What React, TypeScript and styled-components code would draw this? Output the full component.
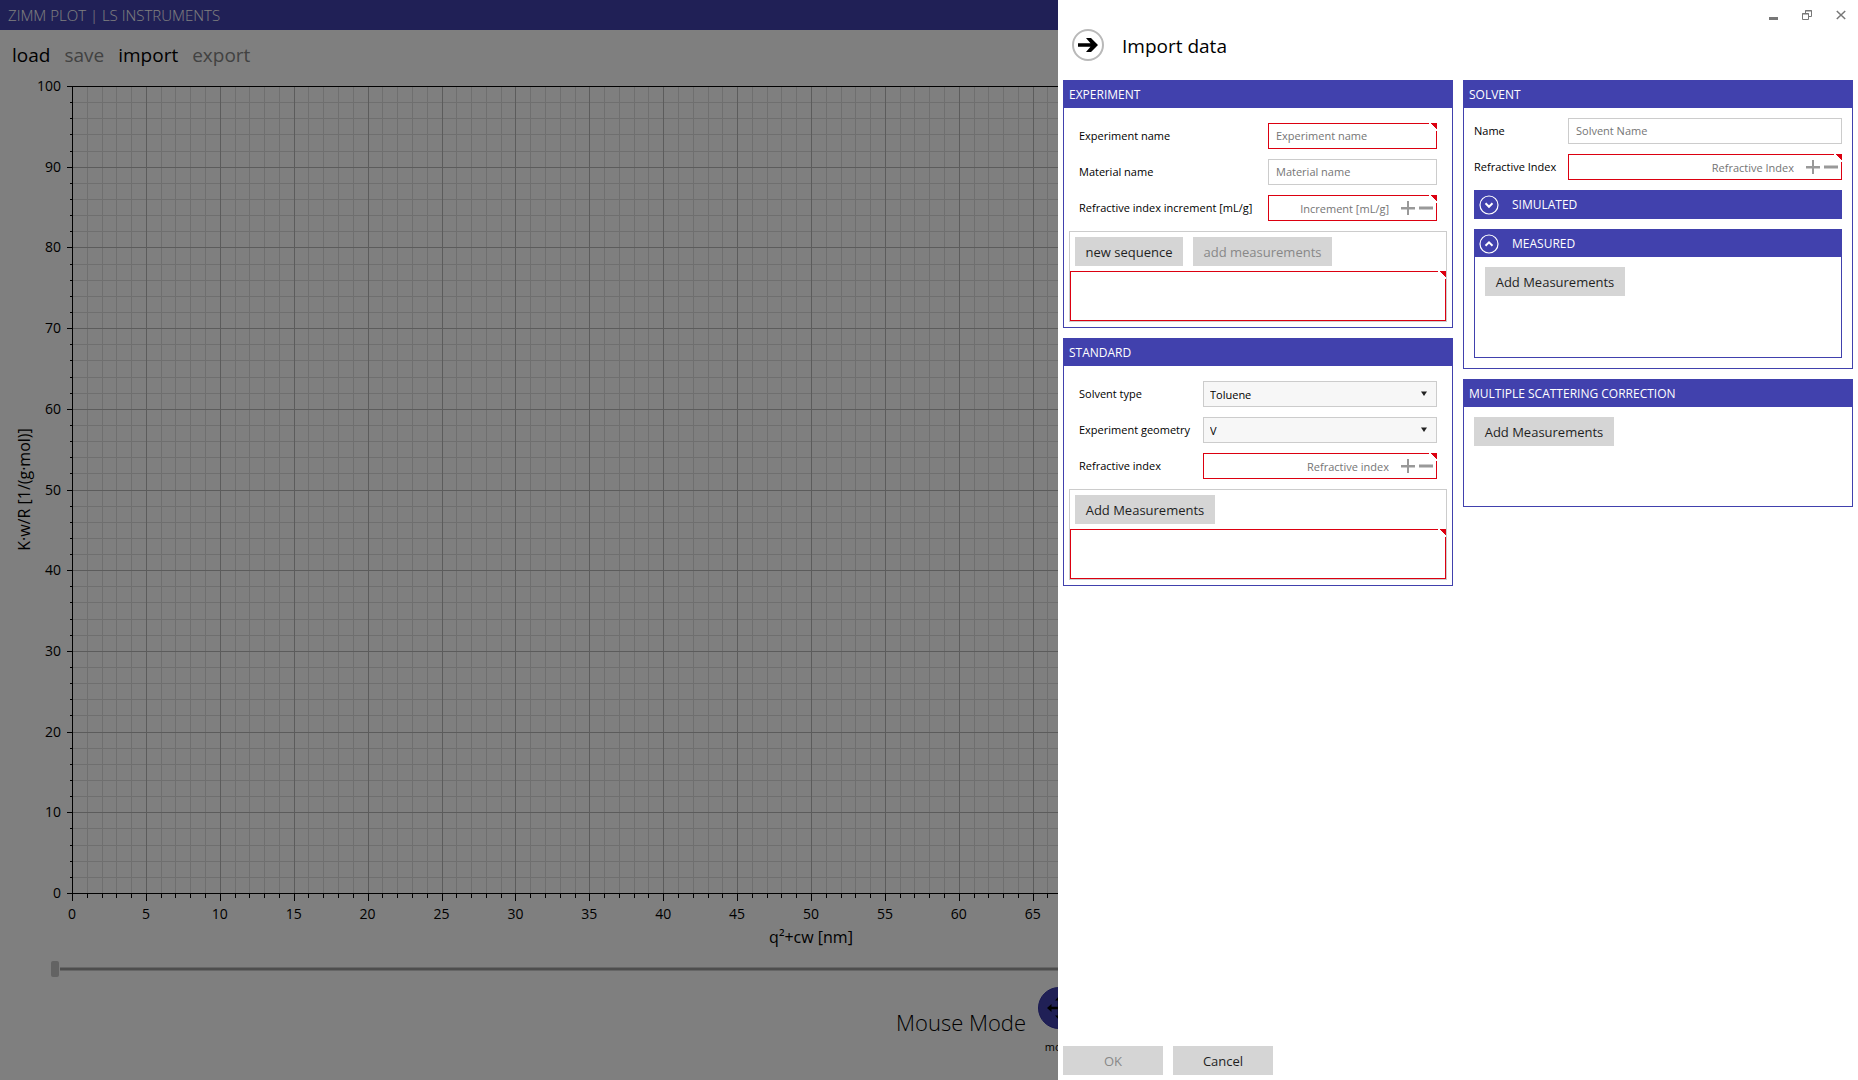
import React, { ReactNode, useId, useState } from 'react';
import styled, { createGlobalStyle, css } from 'styled-components';

const accent = '#4141ad';
const error = '#dc0010';
const border = '#cccccc';

const GlobalStyle = createGlobalStyle`
  *, *::before, *::after { box-sizing: border-box; }
  body { margin: 0; background: #fff; overflow: hidden; }
  body, button, input, select {
    font-family: "Open Sans", "Noto Sans", "Liberation Sans", sans-serif;
  }
`;

/* ---------- main window ---------- */

const Window = styled.main`
  display: flex;
  flex-direction: column;
  height: 100vh;
  color: #000;
`;

const TitleBar = styled.header`
  height: 30px;
  padding: 0 8px;
  background: ${accent};
  color: #fff;
  font-size: 15px;
  font-weight: 300;
  line-height: 31px;
`;

const Toolbar = styled.nav`
  display: flex;
  gap: 14px;
  height: 56px;
  padding: 0 12px;
`;

const ToolbarButton = styled.button`
  height: 50px;
  padding: 0;
  border: 0;
  background: none;
  color: #000;
  font-size: 19px;
  line-height: 50px;

  &:disabled { color: #848484; }
`;

const PlotArea = styled.section`
  display: grid;
  flex: 1;
  min-height: 0;
  padding: 0 308px 0 72px;
`;

const PlotSvg = styled.svg`
  display: block;
  width: 100%;
  height: 100%;
  overflow: visible;
  fill: #000;
  font-family: "Open Sans", "Noto Sans", sans-serif;
`;

const RangeSlider = styled.input`
  appearance: none;
  flex: none;
  height: 16px;
  margin: 68px 300px 0 51px;
  background: linear-gradient(#ccc 0 1px, #9a9a9a 1px 3px, #ccc 3px) 9px 6px / 100% 4px no-repeat;

  &::-webkit-slider-thumb {
    appearance: none;
    width: 8px;
    height: 16px;
    border-radius: 2px;
    background: #c6c6c6;
  }
`;

const ModeBar = styled.div`
  display: flex;
  height: 103px;
  padding-top: 10px;
  margin-left: calc(50% - 33px);
`;

const ModeTitle = styled.h2`
  width: 141px;
  margin: 0;
  font-size: 22px;
  font-weight: 300;
  line-height: 70px;
`;

const ModeButton = styled.button`
  display: flex;
  flex-direction: column;
  align-items: center;
  gap: 8px;
  width: 44px;
  padding: 0;
  border: 0;
  background: none;
  color: #000;
  font-size: 11px;
  line-height: 20px;
`;

const Dimmer = styled.div`
  position: fixed;
  inset: 0;
  background: rgba(0, 0, 0, 0.5);
`;

/* ---------- flyout ---------- */

const Flyout = styled.section`
  position: fixed;
  inset: 0 0 0 auto;
  display: flex;
  flex-direction: column;
  width: 800px;
  max-width: 100%;
  padding: 0 5px;
  background: #fff;
`;

const WindowButtons = styled.div`
  display: flex;
  justify-content: flex-end;
  height: 29px;
  margin-right: -5px;
`;

const WindowButton = styled.button`
  display: grid;
  place-items: center;
  width: 34px;
  padding: 0;
  border: 0;
  background: none;
`;

const FlyoutHeader = styled.header`
  display: flex;
  align-items: center;
  gap: 18px;
  height: 32px;
  margin: 0 9px 19px;
`;

const BackButton = styled.button`
  width: 32px;
  height: 32px;
  padding: 0;
  border: 0;
  background: none;
`;

const FlyoutTitle = styled.h1`
  margin: 0;
  padding-top: 2px;
  font-size: 19px;
  font-weight: 400;
  line-height: 32px;
`;

const Columns = styled.div`
  display: grid;
  flex: 1;
  grid-template-columns: repeat(2, minmax(0, 1fr));
  align-items: start;
  gap: 10px;
`;

const Column = styled.div`
  display: grid;
  grid-template-columns: minmax(0, 1fr);
  gap: 10px;
`;

const Panel = styled.section`
  border: 1px solid ${accent};
`;

const PanelTitle = styled.h2`
  height: 27px;
  margin: 0;
  padding: 0 5px;
  background: ${accent};
  color: #fff;
  font-size: 12px;
  font-weight: 400;
  line-height: 27px;
`;

const PanelBody = styled.div<{ $inset?: number; $minHeight?: number }>`
  padding: ${p => p.$inset ?? 5}px;
  min-height: ${p => p.$minHeight ?? 0}px;
`;

const Form = styled.div<{ $labelWidth: number; $inset?: boolean }>`
  display: grid;
  grid-template-columns: ${p => p.$labelWidth}px minmax(0, 1fr);
  row-gap: 10px;
  margin-bottom: 10px;
  padding: ${p => (p.$inset ? '10px 10px 0' : '0')};
`;

const Label = styled.label`
  font-size: 11px;
  line-height: 26px;
  white-space: nowrap;
`;

const field = css<{ $invalid?: boolean }>`
  width: 100%;
  height: 26px;
  border: 1px solid ${p => (p.$invalid ? error : border)};
  border-radius: 0;
  font-size: 11px;
`;

const FieldFrame = styled.div`
  position: relative;
`;

const TextInput = styled.input<{ $invalid?: boolean }>`
  ${field}
  display: block;
  padding: 0 7px 2px;
  background: #fff;
  outline: 0;

  &::placeholder { color: #757575; opacity: 1; }
`;

const NumberFrame = styled.div<{ $invalid?: boolean }>`
  ${field}
  display: flex;
  align-items: center;
  gap: 4px;
  padding-right: 3px;
`;

const NumberInput = styled.input`
  flex: 1;
  min-width: 0;
  height: 24px;
  padding: 0 8px;
  border: 0;
  outline: 0;
  background: none;
  font-size: 11px;
  text-align: right;

  &::placeholder { color: #757575; opacity: 1; }
`;

const SpinButton = styled.button`
  display: grid;
  width: 14px;
  height: 24px;
  padding: 0;
  border: 0;
  background: none;
  place-items: center;
`;

const ErrorCorner = styled.span`
  position: absolute;
  top: 0;
  right: 0;
  width: 8px;
  height: 8px;
  background: linear-gradient(to top right, #fff 0 60%, ${error} 60%);
`;

const SelectFrame = styled.div`
  position: relative;
`;

const Select = styled.select`
  ${field}
  display: block;
  appearance: none;
  padding: 0 6px;
  background: #f7f7f7;
  color: #000;
`;

const SelectArrow = styled.svg`
  position: absolute;
  top: 10px;
  right: 10px;
  pointer-events: none;
`;

const ListFrame = styled.div`
  border: 1px solid ${border};
`;

const ButtonRow = styled.div`
  display: flex;
  gap: 10px;
  padding: 5px;
`;

const Button = styled.button<{ $width: number }>`
  display: block;
  width: ${p => p.$width}px;
  height: 29px;
  padding: 1px 0 0;
  border: 0;
  background: #d5d5d5;
  color: #1f1f1f;
  font-size: 13px;
  line-height: 28px;

  &:disabled { color: #888; }
`;

const MeasurementList = styled.div`
  position: relative;
  height: 50px;
  border: 1px solid ${error};

  ${ErrorCorner} { top: -1px; right: -1px; }
`;

const Expanders = styled.div`
  display: grid;
  gap: 10px;
`;

const ExpanderFrame = styled.div`
  border: 1px solid ${accent};
`;

const ExpanderHeader = styled.button`
  display: flex;
  align-items: center;
  gap: 13px;
  width: 100%;
  height: 27px;
  padding: 0 4px;
  border: 0;
  background: ${accent};
  color: #fff;
  font-size: 12px;
`;

const ExpanderBody = styled.div`
  min-height: 100px;
  padding: 10px;
`;

const FlyoutFooter = styled.footer`
  display: flex;
  gap: 10px;
  padding-bottom: 5px;
`;

/* ---------- parts ---------- */

function range(from: number, to: number, step: number) {
  const out: number[] = [];
  for (let v = from; v <= to; v += step) out.push(v);
  return out;
}

function ZimmPlot() {
  const xs = range(0, 100, 1);
  const ys = range(0, 100, 2);
  const minor = '#dedede';
  const major = '#b8b8b8';
  return (
    <PlotSvg role="img" aria-label="Zimm plot">
      <g transform="translate(0.5 0.5)" shapeRendering="crispEdges" strokeWidth="1">
        {xs.filter(v => v % 5).map(v => (
          <line key={v} x1={`${v}%`} x2={`${v}%`} y1="0" y2="100%" stroke={minor} />
        ))}
        {ys.filter(v => v % 10).map(v => (
          <line key={v} x1="0" x2="100%" y1={`${v}%`} y2={`${v}%`} stroke={minor} />
        ))}
        {xs.filter(v => v % 5 === 0).map(v => (
          <line key={v} x1={`${v}%`} x2={`${v}%`} y1="0" y2="100%" stroke={major} />
        ))}
        {ys.filter(v => v % 10 === 0).map(v => (
          <line key={v} x1="0" x2="100%" y1={`${v}%`} y2={`${v}%`} stroke={major} />
        ))}
        <rect width="100%" height="100%" fill="none" stroke="#000" />
        {ys.map(v => (
          <line key={v} x1={v % 10 ? -3 : -6} x2="0" y1={`${v}%`} y2={`${v}%`} stroke="#000" />
        ))}
        <svg y="100%" width="100%" height="7" overflow="visible">
          {xs.map(v => (
            <line key={v} x1={`${v}%`} x2={`${v}%`} y1="0" y2={v % 5 ? 4 : 7} stroke="#000" />
          ))}
        </svg>
      </g>
      <g fontSize="14" textAnchor="end">
        {range(0, 100, 10).map(v => (
          <text key={v} x="-11" y={`${100 - v}%`} dy="5">{v}</text>
        ))}
      </g>
      <g fontSize="14" textAnchor="middle">
        {range(0, 100, 5).map(v => (
          <text key={v} x={`${v}%`} y="100%" dy="26">{v}</text>
        ))}
      </g>
      <text x="50%" y="100%" dy="50" fontSize="16" textAnchor="middle">q²+cw [nm]</text>
      <svg y="50%" overflow="visible">
        <text transform="translate(-42 0) rotate(-90)" fontSize="16" textAnchor="middle">
          K·w/R [1/(g·mol)]
        </text>
      </svg>
    </PlotSvg>
  );
}

function TextField({ label, placeholder, invalid }: { label: string; placeholder: string; invalid?: boolean }) {
  const id = useId();
  return (
    <>
      <Label htmlFor={id}>{label}</Label>
      <FieldFrame>
        <TextInput id={id} placeholder={placeholder} $invalid={invalid} />
        {invalid && <ErrorCorner />}
      </FieldFrame>
    </>
  );
}

function NumberField({ label, placeholder }: { label: string; placeholder: string }) {
  const id = useId();
  const [value, setValue] = useState('');
  const step = (d: number) => setValue(String((Number(value) || 0) + d));
  return (
    <>
      <Label htmlFor={id}>{label}</Label>
      <FieldFrame>
        <NumberFrame $invalid>
          <NumberInput
            id={id}
            inputMode="decimal"
            placeholder={placeholder}
            value={value}
            onChange={e => setValue(e.target.value)}
          />
          <SpinButton type="button" aria-label="Increase" onClick={() => step(1)}>
            <svg width="14" height="14" viewBox="0 0 14 14" fill="#999">
              <path d="M6 0h2v6h6v2.500H8V14H6V8.500H0V6h6z" />
            </svg>
          </SpinButton>
          <SpinButton type="button" aria-label="Decrease" onClick={() => step(-1)}>
            <svg width="14" height="14" viewBox="0 0 14 14" fill="#999">
              <path d="M0 5.500h14v3H0z" />
            </svg>
          </SpinButton>
        </NumberFrame>
        <ErrorCorner />
      </FieldFrame>
    </>
  );
}

function SelectField({ label, options }: { label: string; options: string[] }) {
  const id = useId();
  return (
    <>
      <Label htmlFor={id}>{label}</Label>
      <SelectFrame>
        <Select id={id}>
          {options.map(o => <option key={o}>{o}</option>)}
        </Select>
        <SelectArrow width="6" height="5" viewBox="0 0 6 5" fill="#222">
          <path d="M0 0.500h6L3 5z" />
        </SelectArrow>
      </SelectFrame>
    </>
  );
}

function Expander({ title, open: initial, children }: { title: string; open?: boolean; children?: ReactNode }) {
  const [open, setOpen] = useState(!!initial);
  return (
    <ExpanderFrame>
      <ExpanderHeader type="button" aria-expanded={open} onClick={() => setOpen(!open)}>
        <svg width="20" height="20" viewBox="0 0 20 20" fill="none" stroke="#fff">
          <circle cx="10" cy="10" r="9" strokeWidth="1.200" />
          <path d={open ? 'M6.500 11.800L10 8.300l3.500 3.500' : 'M6.500 8.300L10 11.800l3.500-3.500'} strokeWidth="2" />
        </svg>
        {title}
      </ExpanderHeader>
      {open && <ExpanderBody>{children}</ExpanderBody>}
    </ExpanderFrame>
  );
}

export default function App() {
  return (
    <>
      <GlobalStyle />
      <Window>
        <TitleBar>ZIMM PLOT | LS INSTRUMENTS</TitleBar>
        <Toolbar>
          <ToolbarButton>load</ToolbarButton>
          <ToolbarButton disabled>save</ToolbarButton>
          <ToolbarButton>import</ToolbarButton>
          <ToolbarButton disabled>export</ToolbarButton>
        </Toolbar>
        <PlotArea><ZimmPlot /></PlotArea>
        <RangeSlider type="range" min={0} max={100} defaultValue={0} aria-label="Plot range" />
        <ModeBar>
          <ModeTitle>Mouse Mode</ModeTitle>
          <ModeButton>
            <svg width="42" height="42" viewBox="0 0 42 42">
              <circle cx="21" cy="21" r="20.500" fill={accent} stroke="#3030a0" />
              <path
                d="M21 9l4 4.500h-2.800v6.300h6.300V17l4.500 4-4.500 4v-2.800h-6.300v6.300H25L21 33l-4-4.500h2.800v-6.300h-6.300V25L9 21l4.500-4v2.800h6.300v-6.300H17z"
                fill="#000"
              />
            </svg>
            move
          </ModeButton>
        </ModeBar>
      </Window>

      <Dimmer />

      <Flyout aria-label="Import data">
        <WindowButtons>
          <WindowButton aria-label="Minimize">
            <svg width="10" height="10" viewBox="0 0 10 10" fill="#777">
              <path d="M1 7h9v3H1z" />
            </svg>
          </WindowButton>
          <WindowButton aria-label="Restore">
            <svg width="10" height="10" viewBox="0 0 10 10" fill="none" stroke="#777">
              <path d="M0.500 3.500h6v6h-6zM0 4h7M3.500 3V0.500h6v6H7M3 1h7" />
            </svg>
          </WindowButton>
          <WindowButton aria-label="Close">
            <svg width="10" height="10" viewBox="0 0 10 10" fill="none" stroke="#777" strokeWidth="1.500">
              <path d="M0.800 1l8.400 8M9.200 1L0.800 9" />
            </svg>
          </WindowButton>
        </WindowButtons>

        <FlyoutHeader>
          <BackButton aria-label="Back">
            <svg width="32" height="32" viewBox="0 0 32 32">
              <circle cx="16" cy="16" r="15" fill="none" stroke="#b9b9b9" strokeWidth="2" />
              <path d="M6 14.300h12.500L14 9h5l7 7-7 7h-5l4.500-5.300H6z" fill="#000" />
            </svg>
          </BackButton>
          <FlyoutTitle>Import data</FlyoutTitle>
        </FlyoutHeader>

        <Columns>
          <Column>
            <Panel>
              <PanelTitle>EXPERIMENT</PanelTitle>
              <PanelBody>
                <Form $labelWidth={189} $inset>
                  <TextField label="Experiment name" placeholder="Experiment name" invalid />
                  <TextField label="Material name" placeholder="Material name" />
                  <NumberField label="Refractive index increment [mL/g]" placeholder="Increment [mL/g]" />
                </Form>
                <ListFrame>
                  <ButtonRow>
                    <Button $width={108}>new sequence</Button>
                    <Button $width={139} disabled>add measurements</Button>
                  </ButtonRow>
                  <MeasurementList><ErrorCorner /></MeasurementList>
                </ListFrame>
              </PanelBody>
            </Panel>
            <Panel>
              <PanelTitle>STANDARD</PanelTitle>
              <PanelBody>
                <Form $labelWidth={124} $inset>
                  <SelectField label="Solvent type" options={['Toluene']} />
                  <SelectField label="Experiment geometry" options={['V']} />
                  <NumberField label="Refractive index" placeholder="Refractive index" />
                </Form>
                <ListFrame>
                  <ButtonRow>
                    <Button $width={140}>Add Measurements</Button>
                  </ButtonRow>
                  <MeasurementList><ErrorCorner /></MeasurementList>
                </ListFrame>
              </PanelBody>
            </Panel>
          </Column>

          <Column>
            <Panel>
              <PanelTitle>SOLVENT</PanelTitle>
              <PanelBody $inset={10}>
                <Form $labelWidth={94}>
                  <TextField label="Name" placeholder="Solvent Name" />
                  <NumberField label="Refractive Index" placeholder="Refractive Index" />
                </Form>
                <Expanders>
                  <Expander title="SIMULATED" />
                  <Expander title="MEASURED" open>
                    <Button $width={140}>Add Measurements</Button>
                  </Expander>
                </Expanders>
              </PanelBody>
            </Panel>
            <Panel>
              <PanelTitle>MULTIPLE SCATTERING CORRECTION</PanelTitle>
              <PanelBody $inset={10} $minHeight={99}>
                <Button $width={140}>Add Measurements</Button>
              </PanelBody>
            </Panel>
          </Column>
        </Columns>

        <FlyoutFooter>
          <Button $width={100} disabled>OK</Button>
          <Button $width={100}>Cancel</Button>
        </FlyoutFooter>
      </Flyout>
    </>
  );
}
